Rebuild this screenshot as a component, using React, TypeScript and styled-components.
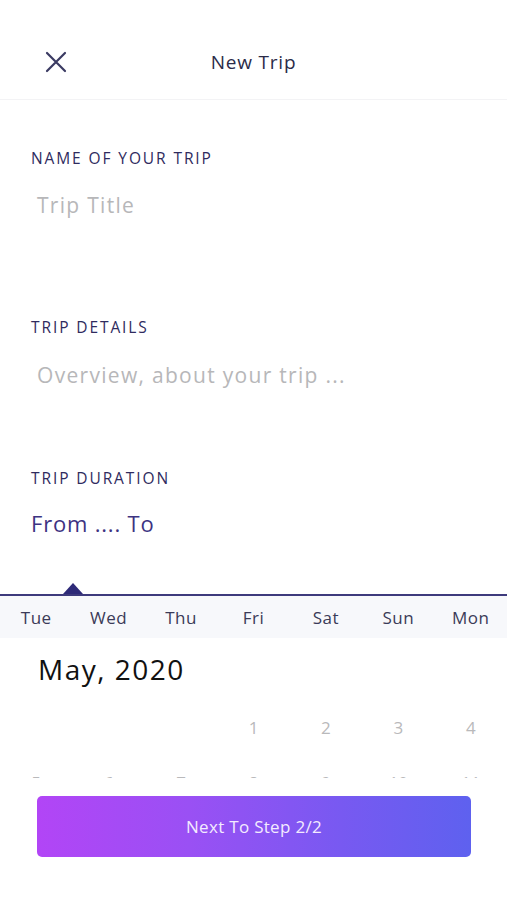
import React from "react";
import styled, { createGlobalStyle } from "styled-components";

const Global = createGlobalStyle`
  html, body { margin: 0; padding: 0; background: #ffffff; }
  body { font-family: "Open Sans", "Noto Sans", sans-serif; }
  * { box-sizing: border-box; }
`;

const Screen = styled.div`
  width: 507px;
  height: 900px;
  display: flex;
  flex-direction: column;
  background: #ffffff;
  overflow: hidden;
`;

const Header = styled.header`
  height: 100px;
  flex-shrink: 0;
  display: grid;
  grid-template-columns: 100px 1fr 100px;
  align-items: center;
  border-bottom: 1px solid #f3f3f5;
  padding-top: 24px;
`;

const CloseButton = styled.button`
  border: none;
  background: none;
  padding: 0;
  margin-left: 45px;
  width: 22px;
  height: 22px;
  display: flex;
  align-items: center;
  justify-content: center;
  cursor: pointer;
`;

const Title = styled.h1`
  margin: 0;
  text-align: center;
  font-size: 19px;
  font-weight: 400;
  color: #2b2b48;
  letter-spacing: 0.8px;
`;

const Form = styled.div`
  display: flex;
  flex-direction: column;
  padding: 0 31px;
`;

const Label = styled.div<{ $top: number }>`
  margin-top: ${(p) => p.$top}px;
  font-size: 15.5px;
  line-height: 20px;
  color: #2f2b5e;
  letter-spacing: 1.9px;
  text-transform: uppercase;
`;

const Placeholder = styled.div<{ $top: number }>`
  margin-top: ${(p) => p.$top}px;
  padding-left: 6px;
  font-size: 21px;
  line-height: 30px;
  color: #b7b7b9;
  letter-spacing: 1.3px;
`;

const Duration = styled.div`
  margin-top: 20px;
  font-size: 22px;
  line-height: 30px;
  color: #3d3382;
  letter-spacing: 0.8px;
`;

const Calendar = styled.div`
  margin-top: 45px;
  display: flex;
  flex-direction: column;
`;

const Indicator = styled.div`
  height: 11px;
  padding-left: 63px;
  display: flex;
  align-items: flex-end;
`;

const Triangle = styled.div`
  width: 0;
  height: 0;
  border-left: 10px solid transparent;
  border-right: 10px solid transparent;
  border-bottom: 11px solid #2e2a78;
`;

const WeekRow = styled.div`
  border-top: 2px solid #3d3a7c;
  height: 44px;
  background: #f7f8fb;
  display: grid;
  grid-template-columns: repeat(7, 1fr);
  align-items: center;
`;

const WeekDay = styled.div`
  text-align: center;
  font-size: 17px;
  color: #3b3b58;
  letter-spacing: 0.5px;
`;

const Month = styled.div`
  margin-top: 11px;
  padding-left: 38px;
  font-size: 28px;
  line-height: 40px;
  color: #111111;
  letter-spacing: 1.5px;
`;

const DaysGrid = styled.div`
  margin-top: 11px;
  height: 78px;
  overflow: hidden;
  display: grid;
  grid-template-columns: repeat(7, 1fr);
  grid-auto-rows: 55px;
  align-items: center;
`;

const Day = styled.div`
  text-align: center;
  font-size: 17px;
  color: #b9b9bb;
`;

const Footer = styled.div`
  flex: 1;
  background: #ffffff;
  padding: 18px 36px 0 37px;
`;

const NextButton = styled.button`
  width: 434px;
  height: 61px;
  border: none;
  border-radius: 5px;
  background: linear-gradient(90deg, #b245f6 0%, #9a50f4 35%, #7859f1 70%, #5e61ef 100%);
  color: #f3ebff;
  font-family: inherit;
  font-size: 17px;
  letter-spacing: 0.3px;
  cursor: pointer;
`;

const weekDays = ["Tue", "Wed", "Thu", "Fri", "Sat", "Sun", "Mon"];
const days: (number | null)[] = [null, null, null, 1, 2, 3, 4, 5, 6, 7, 8, 9, 10, 11];

export default function App() {
  return (
    <Screen>
      <Global />
      <Header>
        <CloseButton aria-label="Close">
          <svg width="22" height="22" viewBox="0 0 22 22">
            <path d="M2 2 L20 20 M20 2 L2 20" stroke="#3a3a62" strokeWidth="2.2" strokeLinecap="round" fill="none" />
          </svg>
        </CloseButton>
        <Title>New Trip</Title>
        <div />
      </Header>
      <Form>
        <Label $top={48}>Name of your trip</Label>
        <Placeholder $top={22}>Trip Title</Placeholder>
        <Label $top={97}>Trip details</Label>
        <Placeholder $top={23}>Overview, about your trip ...</Placeholder>
        <Label $top={78}>Trip duration</Label>
        <Duration>From .... To</Duration>
      </Form>
      <Calendar>
        <Indicator>
          <Triangle />
        </Indicator>
        <WeekRow>
          {weekDays.map((d) => (
            <WeekDay key={d}>{d}</WeekDay>
          ))}
        </WeekRow>
        <Month>May, 2020</Month>
        <DaysGrid>
          {days.map((d, i) => (
            <Day key={i}>{d ?? ""}</Day>
          ))}
        </DaysGrid>
      </Calendar>
      <Footer>
        <NextButton>Next To Step 2/2</NextButton>
      </Footer>
    </Screen>
  );
}
